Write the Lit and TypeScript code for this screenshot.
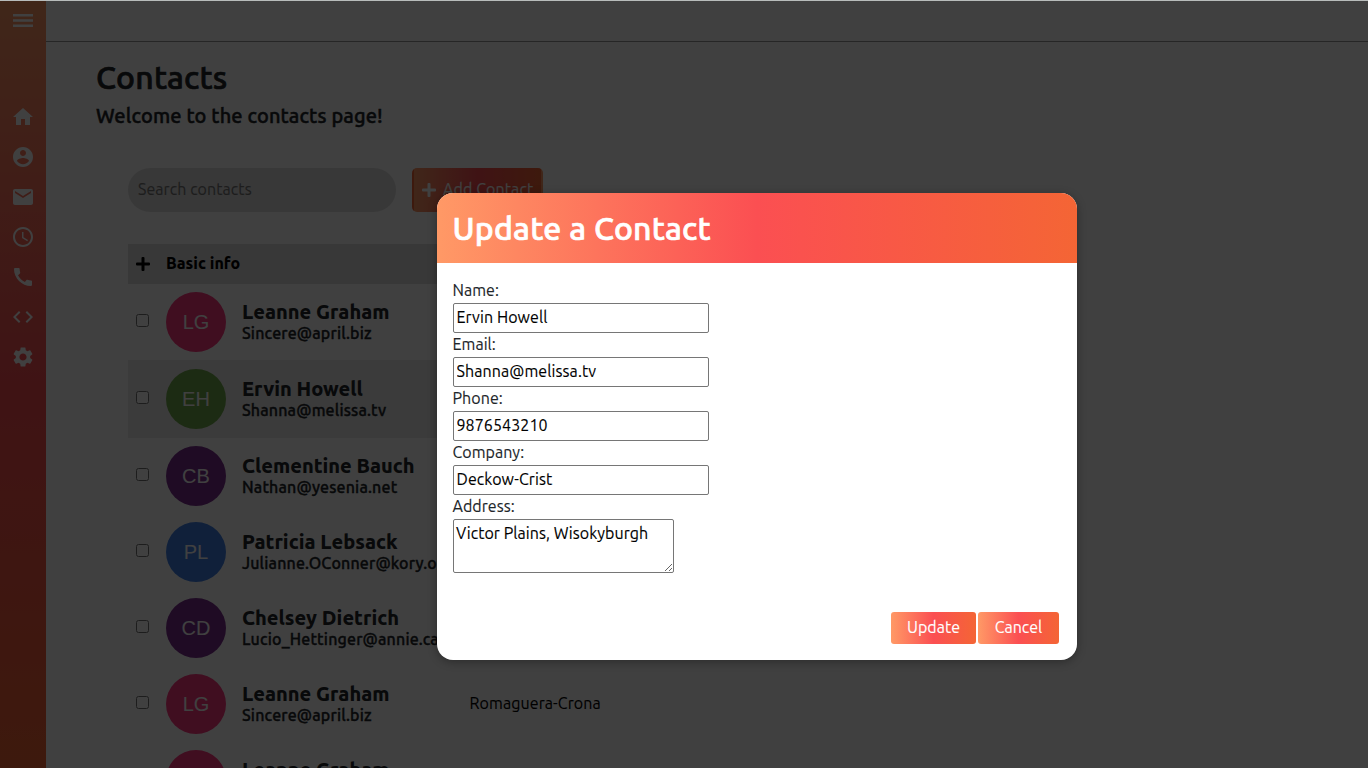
import { LitElement, html, css, svg } from "lit";
import { customElement } from "lit/decorators.js";

const ICONS = [
  "M10 20v-6h4v6h5v-8h3L12 3 2 12h3v8z",
  "M12 2C6.48 2 2 6.48 2 12s4.48 10 10 10 10-4.48 10-10S17.52 2 12 2zm0 3c1.66 0 3 1.34 3 3s-1.34 3-3 3-3-1.34-3-3 1.34-3 3-3zm0 14.2c-2.5 0-4.71-1.28-6-3.22.03-1.99 4-3.08 6-3.08 1.99 0 5.97 1.09 6 3.08-1.29 1.94-3.5 3.22-6 3.22z",
  "M20 4H4c-1.1 0-1.99.9-1.99 2L2 18c0 1.100.9 2 2 2h16c1.100 0 2-.9 2-2V6c0-1.100-.9-2-2-2zm0 4l-8 5-8-5V6l8 5 8-5v2z",
  "M11.990 2C6.470 2 2 6.480 2 12s4.470 10 9.990 10C17.520 22 22 17.520 22 12S17.520 2 11.990 2zM12 20c-4.420 0-8-3.580-8-8s3.580-8 8-8 8 3.580 8 8-3.580 8-8 8zm.5-13H11v6l5.250 3.150.75-1.230-4.500-2.670z",
  "M20.010 15.380c-1.230 0-2.420-.2-3.530-.56-.35-.12-.74-.03-1.010.24l-1.570 1.970c-2.830-1.350-5.480-3.900-6.890-6.830l1.950-1.660c.27-.28.35-.67.24-1.020-.37-1.110-.56-2.300-.56-3.530 0-.54-.45-.99-.99-.99H4.190C3.650 3 3 3.240 3 3.990 3 13.280 10.730 21 20.010 21c.71 0 .99-.63.99-1.180v-3.450c0-.54-.45-.99-.99-.99z",
  "M9.400 16.600L4.800 12l4.600-4.600L8 6l-6 6 6 6 1.400-1.400zm5.200 0l4.600-4.600-4.600-4.600L16 6l6 6-6 6-1.400-1.400z",
  "M19.140 12.940c.04-.3.060-.61.060-.94 0-.32-.02-.64-.07-.94l2.030-1.580c.18-.14.23-.41.12-.61l-1.920-3.320c-.12-.22-.37-.29-.59-.22l-2.390.96c-.5-.38-1.030-.7-1.620-.94l-.36-2.540c-.04-.24-.24-.41-.48-.41h-3.840c-.24 0-.43.17-.47.41l-.36 2.540c-.59.24-1.130.57-1.620.94l-2.390-.96c-.22-.08-.47 0-.59.22L2.740 8.870c-.12.21-.08.47.12.61l2.030 1.580c-.05.3-.09.63-.09.94s.02.64.07.94l-2.030 1.580c-.18.14-.23.41-.12.61l1.920 3.320c.12.22.37.29.59.22l2.390-.96c.5.38 1.030.7 1.620.94l.36 2.540c.05.24.24.41.48.41h3.840c.24 0 .44-.17.47-.41l.36-2.540c.59-.24 1.130-.56 1.620-.94l2.390.96c.22.08.47 0 .59-.22l1.920-3.320c.12-.22.07-.47-.12-.61l-2.010-1.580zM12 15.600c-1.980 0-3.600-1.620-3.600-3.600s1.620-3.600 3.600-3.600 3.600 1.620 3.600 3.600-1.620 3.600-3.600 3.600z",
];

const CONTACTS = [
  { name: "Leanne Graham", email: "Sincere@april.biz", tone: "pink", company: "" },
  { name: "Ervin Howell", email: "Shanna@melissa.tv", tone: "green", company: "" },
  { name: "Clementine Bauch", email: "Nathan@yesenia.net", tone: "purple", company: "" },
  { name: "Patricia Lebsack", email: "Julianne.OConner@kory.org", tone: "blue", company: "" },
  { name: "Chelsey Dietrich", email: "Lucio_Hettinger@annie.ca", tone: "purple", company: "" },
  { name: "Leanne Graham", email: "Sincere@april.biz", tone: "pink", company: "Romaguera-Crona" },
  { name: "Leanne Graham", email: "", tone: "pink", company: "" },
];

const initials = (name: string) => name.split(" ").map((w) => w[0]).join("");

const plus = svg`<path d="M5.500 1q0-1 1-1h1q1 0 1 1v4.500H13q1 0 1 1v1q0 1-1 1H8.500V13q0 1-1 1h-1q-1 0-1-1V8.500H1q-1 0-1-1v-1q0-1 1-1h4.500z"/>`;

@customElement("app-root")
export class AppRoot extends LitElement {
  static styles = css`
    :host { display: block; position: relative; height: 768px; overflow: hidden; background: #fff; color: #212529; font: 16px/24px Ubuntu, "Noto Sans", sans-serif; letter-spacing: 0.05px; -webkit-text-stroke: 0.12px currentColor; }
    * { box-sizing: border-box; }
    h1, h2, p { margin: 0; }
    .page { display: flex; height: 768px; border-top: 1px solid #b8bcbb; }
    .side { width: 46px; flex: none; display: flex; flex-direction: column; align-items: center; background: linear-gradient(#ff9966, #fb4c52, #f46535); color: #fff; }
    .side svg { width: 24px; height: 24px; margin-bottom: 16px; flex: none; fill: currentColor; }
    .side .menu { width: 20px; height: 13px; margin: 13px 0 78px; }
    .main { flex: 1; min-width: 0; }
    .bar { height: 41px; border-bottom: 1px solid #999; }
    .content { padding: 16px 50px 0; }
    h1 { font-size: 32px; line-height: 38px; font-weight: 500; letter-spacing: 0.22px; -webkit-text-stroke: 0.7px currentColor; }
    h2 { font-size: 20px; line-height: 24px; font-weight: 500; margin-top: 8px; letter-spacing: 0.13px; -webkit-text-stroke: 0.45px currentColor; }
    .tools { display: flex; gap: 16px; margin: 40px 0 32px 32px; }
    .search { width: 268px; height: 44px; border: 0; border-radius: 22px; background: #e0e0e0; padding: 0 10px 2px; font: inherit; letter-spacing: 0.06px; }
    .search::placeholder { color: #757575; }
    .add { width: 131px; height: 44px; display: flex; align-items: center; gap: 7px; border: 2px solid transparent; border-radius: 5px; padding: 0 8px; color: #fff; white-space: nowrap; letter-spacing: 0.1px; background: linear-gradient(90deg, #ff9966, #fb4c52, #f46535); }
    .add svg { width: 14px; height: 14px; fill: currentColor; flex: none; }
    .add span, .head span { padding-bottom: 2px; }
    .table { width: 640px; margin-left: 32px; color: #212529; }
    .head { display: flex; align-items: center; gap: 16px; height: 40px; padding: 0 8px; background: #e0e0e0; color: #000; font-weight: 800; letter-spacing: 0; -webkit-text-stroke: 0; }
    .head svg { width: 14px; height: 14px; }
    .row { display: flex; height: 76px; padding: 8px; }
    .row.on { height: 78px; padding-top: 9px; background: #e9e9e9; }
    .row input { width: 13px; height: 13px; margin: 22px 17px 0 0; flex: none; }
    .av { width: 60px; height: 60px; border-radius: 50%; color: #fff; font: 20px/60px "Liberation Sans", Arial, sans-serif; text-align: center; flex: none; margin-right: 16px; letter-spacing: 0; -webkit-text-stroke: 0; }
    .pink { background: #ff3880; } .green { background: #72aa4c; } .purple { background: #7b2f8f; } .blue { background: #4080e8; }
    .info { width: 227.600px; flex: none; padding-top: 8px; white-space: nowrap; font-weight: 500; letter-spacing: 0.16px; -webkit-text-stroke: 0.35px currentColor; }
    .nm { font-size: 20px; line-height: 24px; font-weight: 800; letter-spacing: 0; -webkit-text-stroke: 0; }
    .em { line-height: 19px; }
    .co { padding-top: 17px; color: #000; letter-spacing: 0.08px; }
    .shade { position: absolute; inset: 1px 0 0; background: rgba(0, 0, 0, 0.75); display: flex; padding: 192px 0 0 437px; }
    .modal { width: 640px; height: 467px; border-radius: 16px; overflow: hidden; background: #fff; box-shadow: 0 2px 10px rgba(0, 0, 0, 0.32); display: flex; flex-direction: column; }
    .title { height: 70px; padding: 16px 15.500px; color: #fff; background: linear-gradient(90deg, #ff9966, #fb4f52, #f46535); }
    .form { display: flex; flex-direction: column; align-items: flex-start; padding: 15px 16px; }
    .form label { margin-left: -0.5px; }
    .form input { width: 256px; height: 30px; border: 1px solid #767676; border-radius: 2px; padding: 0 2.5px 2px; font: inherit; color: #000; letter-spacing: 0.09px; margin: 1px 0 -1px; }
    .form textarea { width: 221px; height: 54px; border: 1px solid #767676; border-radius: 2px; padding: 1px 2px; font: inherit; color: #000; display: block; letter-spacing: inherit; margin-top: 1px; }
    .acts { margin-top: auto; padding: 0 18px 16px; display: flex; justify-content: flex-end; gap: 2px; }
    .acts button { height: 32px; border: 0; border-radius: 3px; padding: 0 0 2px; width: 81px; color: #fff; font: inherit; background: linear-gradient(90deg, #ff9966, #fb4f52, #f46535); }
    .acts .up { width: 85px; }
  `;

  render() {
    return html`
      <div class="page">
        <nav class="side">
          <svg class="menu" viewBox="0 0 20 13"><path d="M0 0h20v2.500H0zM0 5.200h20v2.500H0zM0 10.400h20v2.500H0z"/></svg>
          ${ICONS.map((d) => html`<svg viewBox="0 0 24 24"><path d=${d} /></svg>`)}
        </nav>
        <div class="main">
          <div class="bar"></div>
          <div class="content">
            <h1>Contacts</h1>
            <h2>Welcome to the contacts page!</h2>
            <div class="tools">
              <input class="search" placeholder="Search contacts" />
              <div class="add"><svg viewBox="0 0 14 14">${plus}</svg><span>Add Contact</span></div>
            </div>
            <div class="table">
              <div class="head"><svg viewBox="0 0 14 14">${plus}</svg><span>Basic info</span></div>
              ${CONTACTS.map((c, i) => html`
                <div class="row ${i === 1 ? "on" : ""}">
                  <input type="checkbox" />
                  <div class="av ${c.tone}">${i < 6 ? initials(c.name) : ""}</div>
                  <div class="info"><div class="nm">${c.name}</div><div class="em">${c.email}</div></div>
                  <div class="co">${c.company}</div>
                </div>`)}
            </div>
          </div>
        </div>
      </div>
      <div class="shade">
        <div class="modal">
          <h1 class="title">Update a Contact</h1>
          <div class="form">
            <label>Name:</label><input .value=${"Ervin Howell"} />
            <label>Email:</label><input .value=${"Shanna@melissa.tv"} />
            <label>Phone:</label><input .value=${"9876543210"} />
            <label>Company:</label><input .value=${"Deckow-Crist"} />
            <label>Address:</label><textarea .value=${"Victor Plains, Wisokyburgh"}></textarea>
          </div>
          <div class="acts"><button class="up">Update</button><button>Cancel</button></div>
        </div>
      </div>`;
  }
}
